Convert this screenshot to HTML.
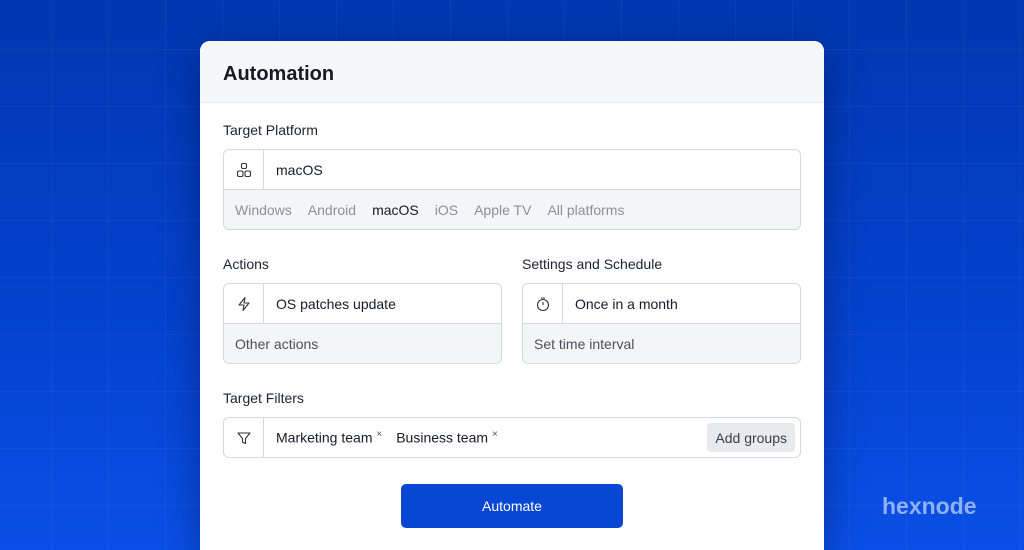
<!DOCTYPE html>
<html><head><meta charset="utf-8"><style>
*{box-sizing:border-box;margin:0;padding:0}
html{width:1024px;height:550px;overflow:hidden}
body{width:1024px;height:550px;overflow:hidden;font-family:"Liberation Sans",sans-serif;position:relative;
background:
linear-gradient(rgba(255,255,255,0.045) 1px,transparent 1px) 0 49px/57px 57px,
linear-gradient(90deg,rgba(255,255,255,0.045) 1px,transparent 1px) 51px 0/57px 57px,
linear-gradient(180deg,#0137b0 0%,#0443d0 60%,#0a4fe6 100%);}
.card{position:absolute;left:200px;top:41px;width:624px;height:509px;background:#fff;border-radius:10px 10px 0 0;overflow:hidden;box-shadow:0 10px 40px rgba(0,0,30,.35)}
.hd{height:62px;background:#f6f7fb;border-bottom:1px solid #e6e8ee;padding:22px 23px;font-size:20px;font-weight:bold;color:#141a26}
.lbl{position:absolute;font-size:14px;color:#1c2230}
.box{position:absolute;border:1px solid #d5d8de;border-radius:6px;overflow:hidden;background:#fff}
.row{height:40px;display:flex;align-items:center;border-bottom:1px solid #d5d8de;font-size:14px;color:#151b28}
.ic{width:40px;height:100%;border-right:1px solid #d5d8de;display:flex;align-items:center;justify-content:center}
.row .t{padding-left:12px}
.sub{height:39px;background:#f4f5f7;display:flex;align-items:center;padding-left:11px;font-size:14px;color:#4a505c}
.sub span{margin-right:16px;color:#8b909a}
.sub span.a{color:#151b28}
.btn{position:absolute;left:201px;top:443px;width:222px;height:44px;background:#0747d4;border-radius:5px;color:#fff;font-size:14px;display:flex;align-items:center;justify-content:center}
.logo{position:absolute;left:882px;top:493px;font-size:23px;font-weight:bold;color:rgba(190,210,255,.75);letter-spacing:0}
</style></head><body>
<div class="card">
<div class="hd">Automation</div>
<div class="lbl" style="left:23px;top:81px">Target Platform</div>
<div class="box" style="left:23px;top:108px;width:578px;height:81px">
<div class="row"><div class="ic"><svg width="16" height="16" viewBox="0 0 16 16" fill="none" stroke="#333" stroke-width="1.1"><rect x="5.5" y="1.5" width="5" height="5" rx="1.5"/><rect x="1.5" y="9" width="5.5" height="5.5" rx="1.5"/><rect x="9" y="9" width="5.5" height="5.5" rx="1.5"/></svg></div><div class="t">macOS</div></div>
<div class="sub"><span>Windows</span><span>Android</span><span class="a">macOS</span><span>iOS</span><span>Apple TV</span><span>All platforms</span></div>
</div>
<div class="lbl" style="left:23px;top:215px">Actions</div>
<div class="box" style="left:23px;top:242px;width:279px;height:81px">
<div class="row"><div class="ic"><svg width="16" height="16" viewBox="0 0 16 16" fill="none" stroke="#333" stroke-width="1.1" stroke-linejoin="round"><path d="M9 1.5L3 9h5l-1 5.5L13 7H8z"/></svg></div><div class="t">OS patches update</div></div>
<div class="sub">Other actions</div>
</div>
<div class="lbl" style="left:322px;top:215px">Settings and Schedule</div>
<div class="box" style="left:322px;top:242px;width:279px;height:81px">
<div class="row"><div class="ic"><svg width="16" height="16" viewBox="0 0 16 16" fill="none" stroke="#333" stroke-width="1.1"><circle cx="8" cy="9" r="5.5"/><path d="M6 2h4M8 6v3"/></svg></div><div class="t">Once in a month</div></div>
<div class="sub">Set time interval</div>
</div>
<div class="lbl" style="left:23px;top:349px">Target Filters</div>
<div class="box" style="left:23px;top:376px;width:578px;height:41px">
<div class="row" style="border:none;height:39px"><div class="ic"><svg width="16" height="16" viewBox="0 0 16 16" fill="none" stroke="#333" stroke-width="1.1" stroke-linejoin="round"><path d="M2 3h12l-4.5 5.5v5l-3-1.5V8.5z"/></svg></div>
<div class="t">Marketing team <sup style="font-size:10px;color:#555">×</sup></div><div class="t" style="padding-left:14px">Business team <sup style="font-size:10px;color:#555">×</sup></div>
<div style="margin-left:auto;margin-right:5px;background:#e8eaee;border-radius:4px;height:29px;padding:0 8px;display:flex;align-items:center;color:#3a404c">Add groups</div></div>
</div>
<div class="btn">Automate</div>
</div>
<div class="logo">hexnode</div>
</body></html>
